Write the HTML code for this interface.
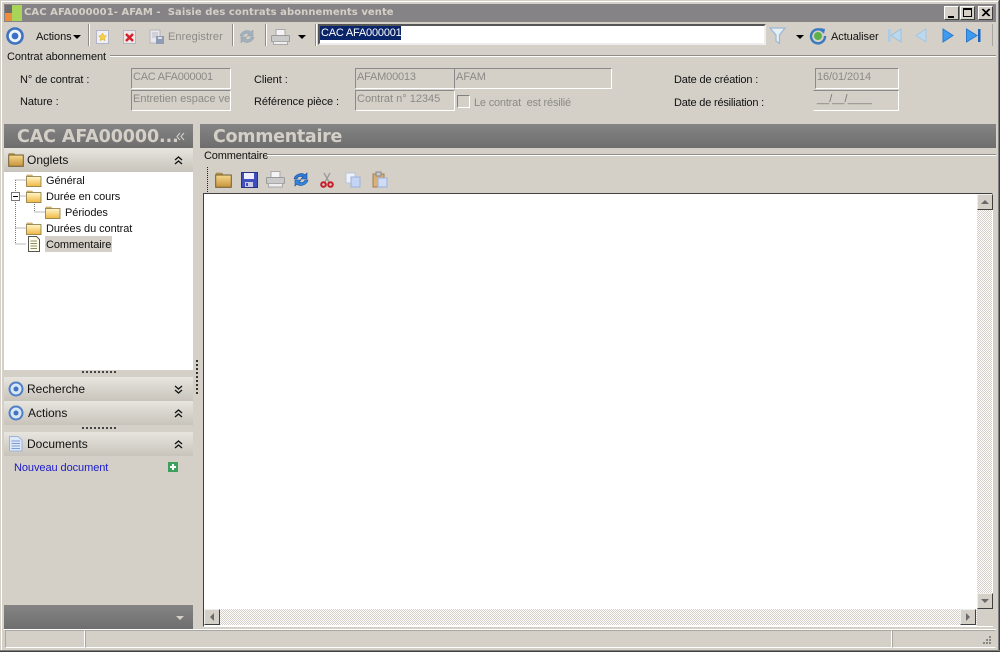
<!DOCTYPE html>
<html lang="fr"><head><meta charset="utf-8"><title>CAC AFA000001</title>
<style>
html,body{margin:0;padding:0;background:#d4d0c8}
#w{position:relative;width:1000px;height:652px;overflow:hidden;background:#d4d0c8;font:11px "Liberation Sans",sans-serif;color:#000}
#w div,#w svg,#w span{position:absolute}
.t{white-space:nowrap;line-height:14px;color:#111;letter-spacing:-.07px}
.f{box-sizing:border-box;border:1px solid;border-color:#8a8a8a #fff #fff #8a8a8a;color:#8c8a86;padding:2px 0 0 1px;line-height:13px;white-space:nowrap;overflow:hidden}
.dis{color:#8c8a86}
.h{background:linear-gradient(#868486,#6e6e6e)}
.p{left:4px;width:189px;height:24px;background:linear-gradient(#e8e5df,#c8c4bb)}
.pt{font-size:12px;color:#111;white-space:nowrap;line-height:14px}
.sep{width:1px;height:22px;background:#8f8d88;border-right:1px solid #fff;top:24px}
.dots{height:1px;border-top:2px dotted #444}
.btn{box-sizing:border-box;width:16px;height:16px;background:#d4d0c8;border:1px solid;border-color:#eee #404040 #404040 #eee}
</style></head><body><div id="w">

<svg style="left:0;top:0" width="0" height="0"><defs>
<linearGradient id="fg" x1="0" y1="0" x2="0" y2="1"><stop offset="0" stop-color="#fff6cc"/><stop offset="1" stop-color="#efb83e"/></linearGradient>
<linearGradient id="fd" x1="0" y1="0" x2="0" y2="1"><stop offset="0" stop-color="#f6d98c"/><stop offset="1" stop-color="#c8923a"/></linearGradient>
<g id="fo"><path d="M1 3V1H6L7 3Z" fill="#e8c470" stroke="#a08848" stroke-width=".6"/><rect x=".5" y="2.500" width="14.500" height="10" fill="url(#fg)" stroke="#8a7640" stroke-width=".8"/></g>
</defs></svg>

<!-- window frame -->
<div style="left:0;top:0;width:1000px;height:1px;background:#d4d0c8"></div>
<div style="left:1px;top:1px;width:998px;height:1px;background:#fff"></div>
<div style="left:1px;top:1px;width:1px;height:650px;background:#fff"></div>
<div style="left:998px;top:1px;width:1px;height:650px;background:#808080"></div>
<div style="left:999px;top:0;width:1px;height:652px;background:#404040"></div>
<div style="left:0;top:650px;width:1000px;height:1px;background:#808080"></div>
<div style="left:0;top:651px;width:1000px;height:1px;background:#404040"></div>

<!-- title bar -->
<div style="left:4px;top:4px;width:992px;height:18px;background:#858385"></div>
<div style="left:5px;top:5px;width:7px;height:8px;background:#6d6b6b"></div>
<div style="left:5px;top:13px;width:7px;height:8px;background:#ee8b3c"></div>
<div style="left:12px;top:5px;width:10px;height:16px;background:#a8d45a"></div>
<div class="t" style="left:24px;top:6px;font:bold 10px/14px 'DejaVu Sans',sans-serif;color:#d4d0c8;letter-spacing:.07px;white-space:pre">CAC AFA000001- AFAM -  Saisie des contrats abonnements vente</div>
<div style="left:944px;top:6px;width:15px;height:14px;box-sizing:border-box;background:#d4d0c8;border:1px solid;border-color:#fff #404040 #404040 #fff"><div style="left:3px;top:9px;width:6px;height:2px;background:#000"></div></div>
<div style="left:960px;top:6px;width:15px;height:14px;box-sizing:border-box;background:#d4d0c8;border:1px solid;border-color:#fff #404040 #404040 #fff"><div style="left:2px;top:1px;width:9px;height:9px;box-sizing:border-box;border:1px solid #000;border-top-width:2px"></div></div>
<div style="left:978px;top:6px;width:15px;height:14px;box-sizing:border-box;background:#d4d0c8;border:1px solid;border-color:#fff #404040 #404040 #fff"><svg style="left:2px;top:1px" width="10" height="10"><path d="M1 1L8 8M2 1L9 8M8 1L1 8M9 1L2 8" stroke="#000" stroke-width="1"/></svg></div>

<!-- toolbar -->
<svg style="left:5px;top:26px" width="20" height="20"><circle cx="10" cy="10" r="7.500" fill="#eef4fc" stroke="#3f73c0" stroke-width="2.600"/><circle cx="10" cy="10" r="3.400" fill="#3a6fc4"/></svg>
<div class="t" style="left:36px;top:30px">Actions</div>
<svg style="left:73px;top:35px" width="8" height="5"><path d="M0 0H8L4 4Z" fill="#000"/></svg>
<div class="sep" style="left:88px"></div>
<svg style="left:95px;top:29px" width="15" height="16"><rect x="1.500" y="1.500" width="12" height="13" fill="#eef0f6" stroke="#b4b6c8"/><path d="M7.500 4l1.300 2.600 2.700.4-2 1.900.5 2.700-2.500-1.200-2.500 1.200.5-2.700-2-1.900 2.700-.4z" fill="#f5d14a" stroke="#d8a820" stroke-width=".5"/></svg>
<svg style="left:122px;top:29px" width="15" height="16"><rect x="1.500" y="1.500" width="12" height="13" fill="#eee8ea" stroke="#b4b6c8"/><path d="M4 5l7 7M11 5l-7 7" stroke="#d4202a" stroke-width="2.400"/></svg>
<svg style="left:149px;top:29px" width="16" height="16"><rect x="1" y="1" width="10" height="13" fill="#e8e8ec" stroke="#b4b4bc"/><path d="M3 4h6M3 6h6M3 8h6" stroke="#b8b8c4"/><rect x="7" y="7" width="8" height="8" fill="#8f9ab4"/><rect x="9" y="8" width="4" height="2" fill="#dcdfe4"/></svg>
<div class="t dis" style="left:168px;top:30px;letter-spacing:.1px">Enregistrer</div>
<div class="sep" style="left:232px"></div>
<svg style="left:238px;top:28px" width="17" height="17"><path d="M2 8C3 3 10 1 13 4L15 2V8H9l2-2C9 5 6 5 5 8Z" fill="#a2b0bc" stroke="#8a9aa8" stroke-width=".5"/><path d="M16 9C15 14 8 16 5 13L3 15V9H9L7 11C9 12 12 12 13 9Z" fill="#a2b0bc" stroke="#8a9aa8" stroke-width=".5"/></svg>
<div class="sep" style="left:265px"></div>
<svg style="left:271px;top:29px" width="19" height="16"><rect x="5" y=".5" width="9" height="6" fill="#f4f4f4" stroke="#a8a8a8"/><rect x=".5" y="6.500" width="18" height="6" rx="1" fill="#cacaca" stroke="#9a9a9a"/><rect x="2.500" y="12.500" width="14" height="3" fill="#eee" stroke="#a8a8a8"/></svg>
<svg style="left:298px;top:35px" width="8" height="5"><path d="M0 0H8L4 4Z" fill="#000"/></svg>
<div class="sep" style="left:315px"></div>
<div style="left:318px;top:24px;width:448px;height:21px;box-sizing:border-box;background:#fff;border:2px solid;border-color:#555 #eee #eee #555"></div>
<div style="left:320px;top:26px;width:81px;height:14px;background:#0a246a"></div>
<div class="t" style="left:321px;top:26px;color:#fff;letter-spacing:-.2px">CAC AFA000001</div>
<svg style="left:769px;top:27px" width="17" height="18"><path d="M1 1H16L10.500 8V16.500L7 14V8Z" fill="#e6eef6" stroke="#9ab8d4" stroke-width="1.200"/></svg>
<svg style="left:796px;top:35px" width="8" height="5"><path d="M0 0H8L4 4Z" fill="#000"/></svg>
<svg style="left:809px;top:27px" width="18" height="18"><path d="M14.500 5A7 7 0 1 0 16 9" fill="none" stroke="#3a7ac0" stroke-width="2.400"/><path d="M11 1l5 1-1 5z" fill="#3a7ac0"/><circle cx="9" cy="9" r="4" fill="#5cb04a"/></svg>
<div class="t" style="left:831px;top:30px">Actualiser</div>
<svg style="left:887px;top:27px" width="16" height="17"><rect x="1" y="2" width="2.500" height="13" fill="#a9cce8"/><path d="M14 2V15L4 8.500Z" fill="#bcd8ee" stroke="#9cc0de"/></svg>
<svg style="left:914px;top:27px" width="14" height="17"><path d="M12 2V15L2 8.500Z" fill="#bcd8ee" stroke="#a4c6e2"/></svg>
<svg style="left:941px;top:27px" width="14" height="17"><path d="M2 2V15L12 8.500Z" fill="#3d9bf0" stroke="#2a78c8"/></svg>
<svg style="left:965px;top:27px" width="17" height="17"><path d="M1.500 2V15L12 8.500Z" fill="#3d9bf0" stroke="#2a78c8"/><rect x="13" y="2" width="2.500" height="13" fill="#1f66c0"/></svg>
<div style="left:992px;top:24px;width:1px;height:22px;background:#a8a6a0"></div>

<!-- group: contrat -->
<div class="t" style="left:7px;top:50px">Contrat abonnement</div>
<div style="left:110px;top:55px;width:886px;height:1px;background:#8f8d88"></div>
<div style="left:110px;top:56px;width:886px;height:1px;background:#fff"></div>

<div class="t" style="left:20px;top:73px">N° de contrat :</div>
<div class="t" style="left:20px;top:95px">Nature :</div>
<div class="f" style="left:131px;top:68px;width:100px;height:21px;letter-spacing:-.25px">CAC AFA000001</div>
<div class="f" style="left:131px;top:90px;width:100px;height:21px">Entretien espace ve</div>
<div class="t" style="left:254px;top:73px">Client :</div>
<div class="t" style="left:254px;top:95px">Référence pièce :</div>
<div class="f" style="left:355px;top:68px;width:100px;height:21px;letter-spacing:-.2px">AFAM00013</div>
<div class="f" style="left:454px;top:68px;width:158px;height:21px">AFAM</div>
<div class="f" style="left:355px;top:90px;width:100px;height:21px">Contrat n° 12345</div>
<div style="left:457px;top:95px;width:13px;height:13px;box-sizing:border-box;background:#d4d0c8;border:1px solid;border-color:#808080 #fff #fff #808080"></div>
<div class="t dis" style="left:474px;top:96px;white-space:pre;letter-spacing:-.2px">Le contrat  est résilié</div>
<div class="t" style="left:674px;top:73px;letter-spacing:-.15px">Date de création :</div>
<div class="t" style="left:674px;top:96px;letter-spacing:-.2px">Date de résiliation :</div>
<div class="f" style="left:815px;top:68px;width:84px;height:21px;letter-spacing:-.1px">16/01/2014</div>
<div class="f" style="left:813px;top:90px;width:86px;height:21px;border-left-color:#d4d0c8;padding-left:3px;color:#777">__/__/____</div>

<!-- left panel -->
<div class="h" style="left:4px;top:124px;width:189px;height:24px"></div>
<div class="t" style="left:17px;top:127px;font:bold 17.500px/20px 'DejaVu Sans',sans-serif;color:#d4d0c8;letter-spacing:-.1px">CAC AFA00000...</div>
<svg style="left:176px;top:132px" width="9" height="9"><path d="M4 1L1 4.500L4 8M8 1L5 4.500L8 8" fill="none" stroke="#d4d0c8" stroke-width="1.100"/></svg>

<div class="p" style="top:148px"></div>
<svg style="left:8px;top:152px" width="16" height="15"><path d="M1 3V1.500H6L7 3Z" fill="#d8a850" stroke="#8a7640" stroke-width=".6"/><rect x=".7" y="3" width="14.600" height="11.300" fill="url(#fd)" stroke="#6e5c30"/></svg>
<div class="pt" style="left:27px;top:153px">Onglets</div>
<svg style="left:174px;top:156px" width="9" height="9"><path d="M1 4L4.500 1L8 4M1 8L4.500 5L8 8" fill="none" stroke="#111" stroke-width="1.300"/></svg>

<div style="left:4px;top:172px;width:189px;height:198px;background:#fff"></div>
<svg style="left:4px;top:172px" width="50" height="80"><path d="M11.500 8V72M11.500 8H22M11.500 24H22M11.500 56H22M11.500 72H22M30.500 30V40H41" fill="none" stroke="#777" stroke-dasharray="1 1"/><rect x="7.500" y="20.500" width="8" height="8" fill="#fff" stroke="#777"/><path d="M9 24.500H14" stroke="#000"/></svg>
<svg style="left:26px;top:174px" width="16" height="13"><use href="#fo"/></svg>
<svg style="left:26px;top:190px" width="16" height="13"><use href="#fo"/></svg>
<svg style="left:45px;top:206px" width="16" height="13"><use href="#fo"/></svg>
<svg style="left:26px;top:222px" width="16" height="13"><use href="#fo"/></svg>
<svg style="left:27px;top:236px" width="14" height="16"><path d="M1.500 .5H9.500L12.500 3.500V15.500H1.500Z" fill="#fffde8" stroke="#555"/><path d="M3.500 5H10M3.500 7.500H10M3.500 10H10M3.500 12.500H10" stroke="#8c8c6c"/></svg>
<div class="t" style="left:46px;top:174px">Général</div>
<div class="t" style="left:46px;top:190px">Durée en cours</div>
<div class="t" style="left:65px;top:206px">Périodes</div>
<div class="t" style="left:46px;top:222px">Durées du contrat</div>
<div style="left:45px;top:236px;width:67px;height:16px;background:#d4d0c8"></div>
<div class="t" style="left:46px;top:238px">Commentaire</div>

<div class="dots" style="left:82px;top:371px;width:34px"></div>
<div class="p" style="top:377px"></div>
<svg style="left:8px;top:381px" width="16" height="16"><circle cx="8" cy="8" r="6.500" fill="#d8e6f6" stroke="#4f7fc4" stroke-width="2"/><circle cx="8" cy="8" r="2.500" fill="#3f73c0"/></svg>
<div class="pt" style="left:27px;top:382px">Recherche</div>
<svg style="left:174px;top:385px" width="9" height="9"><path d="M1 1L4.500 4L8 1M1 5L4.500 8L8 5" fill="none" stroke="#111" stroke-width="1.300"/></svg>
<div class="p" style="top:401px"></div>
<svg style="left:8px;top:405px" width="16" height="16"><circle cx="8" cy="8" r="6.500" fill="#d8e6f6" stroke="#4f7fc4" stroke-width="2"/><circle cx="8" cy="8" r="2.500" fill="#3f73c0"/></svg>
<div class="pt" style="left:28px;top:406px">Actions</div>
<svg style="left:174px;top:409px" width="9" height="9"><path d="M1 4L4.500 1L8 4M1 8L4.500 5L8 8" fill="none" stroke="#111" stroke-width="1.300"/></svg>
<div class="dots" style="left:82px;top:427px;width:34px"></div>
<div class="p" style="top:432px"></div>
<svg style="left:9px;top:436px" width="14" height="16"><path d="M.5 .5H9L13 4V15H.5Z" fill="#dfe8f8" stroke="#9cb4dc"/><path d="M2.500 5H11M2.500 7.500H11M2.500 10H11M2.500 12.500H11" stroke="#7c9cd8"/></svg>
<div class="pt" style="left:27px;top:437px">Documents</div>
<svg style="left:174px;top:440px" width="9" height="9"><path d="M1 4L4.500 1L8 4M1 8L4.500 5L8 8" fill="none" stroke="#111" stroke-width="1.300"/></svg>
<div class="t" style="left:14px;top:461px;color:#1a1ac8">Nouveau document</div>
<div style="left:168px;top:462px;width:10px;height:10px;background:#3f9f5c"></div>
<div style="left:170px;top:466px;width:6px;height:2px;background:#fff"></div>
<div style="left:172px;top:464px;width:2px;height:6px;background:#fff"></div>

<div class="h" style="left:4px;top:605px;width:189px;height:24px"></div>
<svg style="left:176px;top:616px" width="8" height="5"><path d="M0 0H8L4 4Z" fill="#d4d0c8"/></svg>

<!-- vertical splitter dots -->
<div style="left:196px;top:360px;width:1px;height:34px;border-left:2px dotted #333"></div>

<!-- right panel -->
<div class="h" style="left:200px;top:124px;width:796px;height:24px"></div>
<div class="t" style="left:213px;top:127px;font:bold 17.500px/20px 'DejaVu Sans',sans-serif;color:#d4d0c8;letter-spacing:-.3px">Commentaire</div>
<div class="t" style="left:204px;top:149px;letter-spacing:-.15px">Commentaire</div>
<div style="left:267px;top:154px;width:729px;height:1px;background:#8f8d88"></div>
<div style="left:267px;top:155px;width:729px;height:1px;background:#fff"></div>

<div style="left:207px;top:167px;width:0;height:25px;border-left:1px dotted #222"></div>
<svg style="left:215px;top:172px" width="17" height="16"><path d="M1 3V1H7L8 3Z" fill="#c89a48" stroke="#8a7640" stroke-width=".5"/><rect x=".7" y="3" width="15.600" height="12.300" fill="url(#fd)" stroke="#6e5c30"/></svg>
<svg style="left:241px;top:172px" width="17" height="16"><rect x=".5" y=".5" width="16" height="15" fill="#3f4fbc" stroke="#2a2f88"/><rect x="3" y="1" width="10" height="6" fill="#eef"/><rect x="4" y="10" width="8" height="5" fill="#c8cce8"/><rect x="5" y="11" width="2" height="3" fill="#3f4fbc"/></svg>
<svg style="left:266px;top:171px" width="19" height="17"><rect x="5" y=".5" width="9" height="6" fill="#f4f4f4" stroke="#a8a8a8"/><rect x=".5" y="6.500" width="18" height="6" rx="1" fill="#cacaca" stroke="#9a9a9a"/><rect x="2.500" y="12.500" width="14" height="3.500" fill="#eee" stroke="#a8a8a8"/></svg>
<svg style="left:292px;top:171px" width="18" height="17"><path d="M2 8C3 3 10 1 13 4L15 2V8H9l2-2C9 5 6 5 5 8Z" fill="#2c7ad8" stroke="#1a4a98" stroke-width=".6"/><path d="M16 9C15 14 8 16 5 13L3 15V9H9L7 11C9 12 12 12 13 9Z" fill="#2f88e0" stroke="#1a4a98" stroke-width=".6"/></svg>
<svg style="left:320px;top:172px" width="14" height="16"><path d="M4 1L9 10M10 1L5 10" stroke="#9a9a9a" stroke-width="1.300"/><circle cx="3.500" cy="12.500" r="2.300" fill="none" stroke="#c81e28" stroke-width="2"/><circle cx="10.500" cy="12.500" r="2.300" fill="none" stroke="#c81e28" stroke-width="2"/></svg>
<svg style="left:345px;top:172px" width="16" height="16"><rect x="1" y="1" width="9" height="10" fill="#eef2fa" stroke="#b8c4dc"/><rect x="6" y="5" width="9" height="10" fill="#c4d4f4" stroke="#9cb0dc"/></svg>
<svg style="left:372px;top:171px" width="16" height="17"><rect x="1" y="3" width="11" height="13" fill="#d8b078" stroke="#a08050"/><rect x="4" y="1" width="5" height="4" fill="#c8c8c8" stroke="#888"/><rect x="6" y="7" width="9" height="9" fill="#d0dcf4" stroke="#9cb0dc"/></svg>

<!-- editor -->
<div style="left:203px;top:193px;width:790px;height:434px;background:#fff;border-top:1px solid #404040;border-left:1px solid #404040;border-bottom:1px solid #fff;border-right:1px solid #fff;box-sizing:border-box"></div>
<div style="left:977px;top:194px;width:15px;height:415px;background:repeating-conic-gradient(#d4d0c8 0 25%,#fff 0 50%) 0 0/2px 2px"></div>
<div style="left:204px;top:609px;width:773px;height:16px;background:repeating-conic-gradient(#d4d0c8 0 25%,#fff 0 50%) 0 0/2px 2px"></div>
<div style="left:977px;top:609px;width:16px;height:17px;background:#d4d0c8"></div>
<div class="btn" style="left:977px;top:194px"><svg style="left:3px;top:5px" width="8" height="5"><path d="M0 4H8L4 0Z" fill="#6a6a6a"/></svg></div>
<div class="btn" style="left:977px;top:593px"><svg style="left:3px;top:5px" width="8" height="5"><path d="M0 0H8L4 4Z" fill="#6a6a6a"/></svg></div>
<div class="btn" style="left:204px;top:609px"><svg style="left:5px;top:3px" width="5" height="8"><path d="M4 0V8L0 4Z" fill="#6a6a6a"/></svg></div>
<div class="btn" style="left:960px;top:609px"><svg style="left:5px;top:3px" width="5" height="8"><path d="M0 0V8L4 4Z" fill="#6a6a6a"/></svg></div>

<!-- status bar -->
<div style="left:4px;top:629px;width:992px;height:1px;background:#fff"></div>
<div style="left:5px;top:630px;width:80px;height:18px;box-sizing:border-box;border:1px solid;border-color:#a8a6a0 #fff #fff #a8a6a0"></div>
<div style="left:85px;top:630px;width:807px;height:18px;box-sizing:border-box;border:1px solid;border-color:#a8a6a0 #fff #fff #a8a6a0"></div>
<div style="left:892px;top:630px;width:104px;height:18px;box-sizing:border-box;border:1px solid;border-color:#a8a6a0 #d4d0c8 #fff #a8a6a0"></div>
<svg style="left:980px;top:634px" width="14" height="13"><path d="M9 2h2v2H9zM6 5h2v2H6zM9 5h2v2H9zM3 8h2v2H3zM6 8h2v2H6zM9 8h2v2H9z" fill="#8a8884"/></svg>

</div></body></html>
